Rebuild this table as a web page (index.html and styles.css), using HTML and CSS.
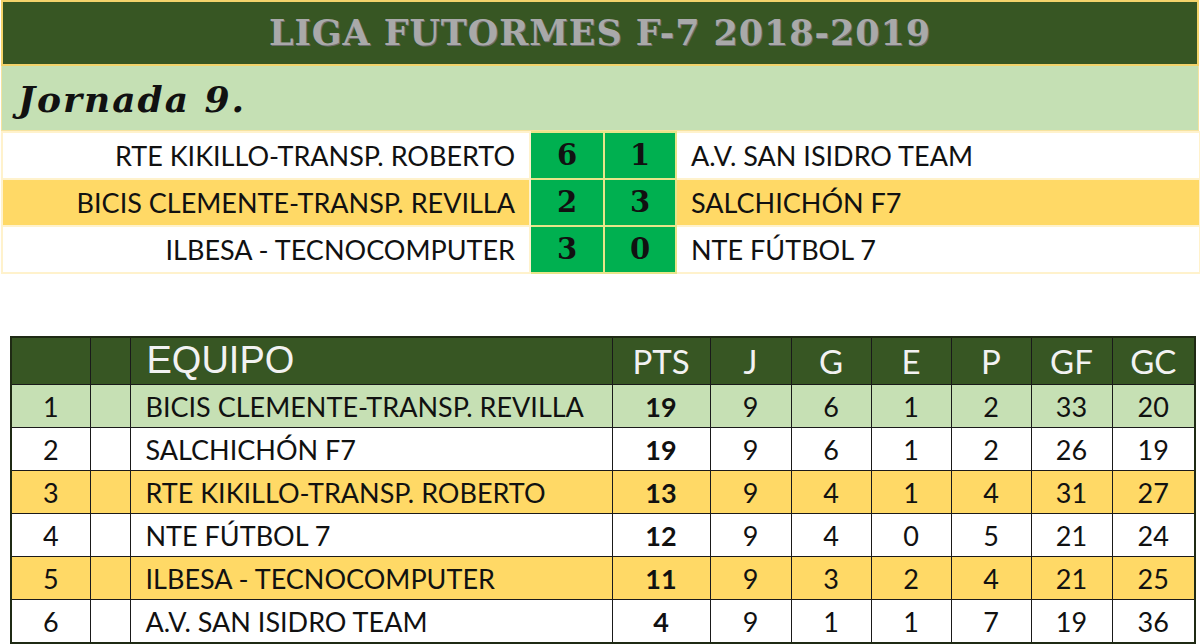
FILE: index.html
```html
<!DOCTYPE html>
<html lang="es">
<head>
<meta charset="utf-8">
<title>Liga Futormes F-7 2018-2019</title>
<link rel="stylesheet" href="styles.css">
</head>
<body>
<div class="page">
  <header class="title">LIGA FUTORMES F-7 2018-2019</header>
  <div class="jornada">Jornada 9.</div>
  <table class="matches">
    <colgroup>
      <col class="c-home"><col class="c-score"><col class="c-score2"><col class="c-away">
    </colgroup>
    <tr class="row-white">
      <td class="home">RTE KIKILLO-TRANSP. ROBERTO</td>
      <td class="score">6</td><td class="score">1</td>
      <td class="away">A.V. SAN ISIDRO TEAM</td>
    </tr>
    <tr class="row-yellow">
      <td class="home">BICIS CLEMENTE-TRANSP. REVILLA</td>
      <td class="score">2</td><td class="score">3</td>
      <td class="away">SALCHICHÓN F7</td>
    </tr>
    <tr class="row-white">
      <td class="home">ILBESA - TECNOCOMPUTER</td>
      <td class="score">3</td><td class="score">0</td>
      <td class="away">NTE FÚTBOL 7</td>
    </tr>
  </table>

  <table class="standings">
    <colgroup>
      <col class="s-pos"><col class="s-blank"><col class="s-team"><col class="s-pts">
      <col class="s-n1"><col class="s-n2"><col class="s-n3"><col class="s-n4"><col class="s-n5"><col class="s-n6">
    </colgroup>
    <thead>
      <tr>
        <th></th><th></th><th class="team-h">EQUIPO</th>
        <th>PTS</th><th>J</th><th>G</th><th>E</th><th>P</th><th>GF</th><th>GC</th>
      </tr>
    </thead>
    <tbody>
      <tr class="row-green"><td>1</td><td></td><td class="team">BICIS CLEMENTE-TRANSP. REVILLA</td><td class="pts">19</td><td>9</td><td>6</td><td>1</td><td>2</td><td>33</td><td>20</td></tr>
      <tr class="row-white"><td>2</td><td></td><td class="team">SALCHICHÓN F7</td><td class="pts">19</td><td>9</td><td>6</td><td>1</td><td>2</td><td>26</td><td>19</td></tr>
      <tr class="row-yellow"><td>3</td><td></td><td class="team">RTE KIKILLO-TRANSP. ROBERTO</td><td class="pts">13</td><td>9</td><td>4</td><td>1</td><td>4</td><td>31</td><td>27</td></tr>
      <tr class="row-white"><td>4</td><td></td><td class="team">NTE FÚTBOL 7</td><td class="pts">12</td><td>9</td><td>4</td><td>0</td><td>5</td><td>21</td><td>24</td></tr>
      <tr class="row-yellow"><td>5</td><td></td><td class="team">ILBESA - TECNOCOMPUTER</td><td class="pts">11</td><td>9</td><td>3</td><td>2</td><td>4</td><td>21</td><td>25</td></tr>
      <tr class="row-white"><td>6</td><td></td><td class="team">A.V. SAN ISIDRO TEAM</td><td class="pts">4</td><td>9</td><td>1</td><td>1</td><td>7</td><td>19</td><td>36</td></tr>
    </tbody>
  </table>
</div>
</body>
</html>
```

FILE: styles.css
```css
html, body {
  margin: 0;
  padding: 0;
  background: #ffffff;
}

.page {
  width: 1200px;
  height: 644px;
  overflow: hidden;
  font-family: Lato, "Liberation Sans", sans-serif;
  color: #111111;
}

.title {
  box-sizing: border-box;
  height: 66px;
  margin: 0 1px;
  border: 2px solid #f3d36b;
  background: #375623;
  color: #a9a9a9;
  font-family: "DejaVu Serif", serif;
  font-weight: bold;
  font-size: 35px;
  letter-spacing: 0.9px;
  text-align: center;
  line-height: 62px;
  text-shadow: 1px 1px 0 #6d6d6d;
}

.jornada {
  box-sizing: border-box;
  height: 65px;
  margin: 0 1px;
  border: 1px solid #f6e3a0;
  border-top: none;
  background: #c5e0b4;
  color: #111111;
  font-family: "DejaVu Serif", serif;
  font-weight: bold;
  font-style: italic;
  font-size: 36px;
  letter-spacing: 2px;
  padding-left: 16px;
  line-height: 66px;
}

.matches {
  width: 1198px;
  margin: 0 1px;
  border-collapse: collapse;
  table-layout: fixed;
  border: 2px solid #fff2cc;
}

.c-home { width: 528px; }
.c-score { width: 74px; }
.c-score2 { width: 72px; }
.c-away { width: 524px; }

.matches td {
  height: 45px;
  padding: 0;
  border: 2px solid #fff2cc;
  font-size: 27px;
  line-height: 45px;
  white-space: nowrap;
}

.matches .home {
  text-align: right;
  padding-right: 14px;
}

.matches .away {
  text-align: left;
  padding-left: 14px;
}

.matches .score {
  background: #00b050;
  border-color: #e7e58a;
  text-align: center;
  font-family: "DejaVu Serif", serif;
  font-weight: bold;
  font-size: 29px;
  color: #111111;
}

.row-white td { background: #ffffff; }
.row-yellow td { background: #ffd966; }
.row-green td { background: #c6e0b4; }
.matches .row-white .score,
.matches .row-yellow .score { background: #00b050; }

.standings {
  margin: 62px 0 0 10px;
  width: 1184px;
  border-collapse: collapse;
  table-layout: fixed;
  border: 2px solid #1f2a14;
}

.s-pos { width: 79px; }
.s-blank { width: 40px; }
.s-team { width: 482px; }
.s-pts { width: 98px; }
.s-n1 { width: 81px; }
.s-n2 { width: 80px; }
.s-n3 { width: 80px; }
.s-n4 { width: 80px; }
.s-n5 { width: 81px; }
.s-n6 { width: 83px; }

.standings th {
  height: 46px;
  padding: 0;
  background: #375623;
  color: #f2f2f2;
  font-weight: normal;
  font-size: 33px;
  border: 1px solid #1a1a1a;
  text-align: center;
}

.standings th.team-h {
  text-align: left;
  padding-left: 16px;
  font-family: "Liberation Sans", Arial, sans-serif;
  font-size: 38px;
  vertical-align: top;
  line-height: 44px;
}

.standings td {
  height: 42px;
  padding: 0;
  border: 1px solid #1a1a1a;
  font-size: 27px;
  text-align: center;
  white-space: nowrap;
}

.standings td.team {
  text-align: left;
  padding-left: 15px;
}

.standings td.pts {
  font-weight: bold;
}
```
